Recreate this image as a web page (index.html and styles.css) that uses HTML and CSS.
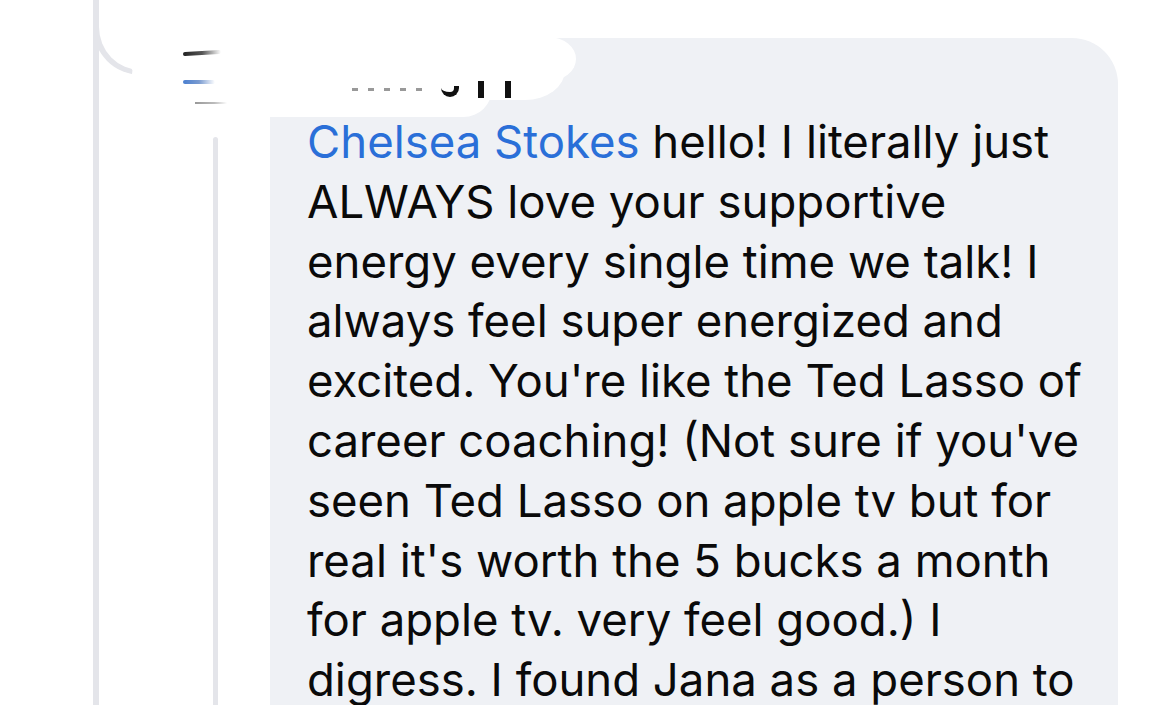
FILE: index.html
```html
<!DOCTYPE html>
<html lang="en">
<head>
<meta charset="utf-8">
<title>Comment</title>
<link rel="stylesheet" href="styles.css">
</head>
<body>
<div class="canvas">
  <div class="thread">
    <div class="rail"></div>
    <div class="reply">
      <div class="rail-inner"></div>
      <div class="bubble">
        <div class="author">&nbsp;</div>
        <p class="body">
          <span class="line"><span class="mention">Chelsea Stokes</span> hello! I literally just</span>
          <span class="line">ALWAYS love your supportive</span>
          <span class="line">energy every single time we talk! I</span>
          <span class="line">always feel super energized and</span>
          <span class="line">excited. You're like the Ted Lasso of</span>
          <span class="line">career coaching! (Not sure if you've</span>
          <span class="line">seen Ted Lasso on apple tv but for</span>
          <span class="line">real it's worth the 5 bucks a month</span>
          <span class="line">for apple tv. very feel good.) I</span>
          <span class="line">digress. I found Jana as a person to</span>
        </p>
      </div>
    </div>
  </div>

  <div class="connector"></div>
  <div class="blob blob-a"></div>
  <div class="blob blob-b"></div>
  <div class="blob blob-c"></div>
  <div class="frag frag-black"></div>
  <div class="frag frag-blue"></div>
  <div class="frag frag-gray"></div>
  <div class="frag frag-dots"></div>
  <div class="frag frag-c"></div>
  <div class="frag frag-i1"></div>
  <div class="frag frag-i2"></div>
</div>
</body>
</html>
```

FILE: styles.css
```css
html, body {
  margin: 0;
  padding: 0;
  background: #ffffff;
}

body {
  width: 1170px;
  height: 705px;
  overflow: hidden;
  font-family: Inter, "Liberation Sans", Arial, sans-serif;
}

.canvas {
  position: relative;
  width: 1170px;
  height: 705px;
  overflow: hidden;
}

.thread {
  display: flex;
  height: 705px;
  padding-left: 93px;
  box-sizing: border-box;
}

.rail {
  width: 6px;
  flex: none;
  background: #e4e5ea;
}

.reply {
  display: flex;
  align-items: flex-start;
  margin-left: 114px;
}

.rail-inner {
  width: 5px;
  flex: none;
  height: 600px;
  margin-top: 137px;
  background: #e4e5ea;
  border-radius: 3px 3px 0 0;
}

.bubble {
  margin-left: 52px;
  margin-top: 38px;
  width: 848px;
  height: 700px;
  box-sizing: border-box;
  padding: 14px 0 0 37px;
  background: #eff1f5;
  border-radius: 46px 46px 0 0;
}

.author {
  height: 60px;
}

.body {
  margin: 0;
  font-size: 45.5px;
  line-height: 59.8px;
  color: #0a0a0a;
  letter-spacing: 0;
}

.line {
  display: block;
  white-space: nowrap;
}

.mention {
  color: #2a6fd8;
}

/* redaction overlay */
.connector {
  position: absolute;
  left: 93px;
  top: -20px;
  width: 70px;
  height: 95px;
  box-sizing: border-box;
  border-left: 6px solid #e4e5ea;
  border-bottom: 5px solid #e4e5ea;
  border-bottom-left-radius: 48px;
}

.blob {
  position: absolute;
  background: #ffffff;
}

.blob-a {
  left: 130px;
  top: 37px;
  width: 446px;
  height: 44px;
  border-radius: 40px 30px 30px 30px / 22px 24px 24px 20px;
}

.blob-b {
  left: 132px;
  top: 60px;
  width: 360px;
  height: 57px;
  border-radius: 20px 40px 40px 30px;
}

.blob-c {
  left: 440px;
  top: 40px;
  width: 125px;
  height: 60px;
  border-radius: 30px 40px 40px 10px / 20px 30px 30px 10px;
}

.frag {
  position: absolute;
}

.frag-black {
  left: 183px;
  top: 51px;
  width: 38px;
  height: 4px;
  background: linear-gradient(90deg, #222 0%, #555 50%, rgba(255,255,255,0) 100%);
  border-radius: 2px;
  transform: skewY(-3deg);
}

.frag-blue {
  left: 183px;
  top: 80px;
  width: 32px;
  height: 4px;
  background: linear-gradient(90deg, #4a7fd0 0%, #7a9bd0 50%, rgba(255,255,255,0) 100%);
  border-radius: 2px;
}

.frag-gray {
  left: 195px;
  top: 102px;
  width: 32px;
  height: 2px;
  background: linear-gradient(90deg, #999 0%, #bbb 60%, rgba(255,255,255,0) 100%);
}

.frag-dots {
  left: 352px;
  top: 88px;
  width: 80px;
  height: 3px;
  background: repeating-linear-gradient(90deg, #999 0 6px, transparent 6px 16px);
}

.frag-c {
  left: 441px;
  top: 86px;
  width: 18px;
  height: 11px;
  box-sizing: border-box;
  border: 5px solid #111;
  border-top: none;
  border-left: none;
  border-radius: 0 0 9px 9px;
}

.frag-i1, .frag-i2 {
  top: 81px;
  width: 6px;
  height: 17px;
  background: #111;
}

.frag-i1 { left: 478px; }
.frag-i2 { left: 505px; }
```
